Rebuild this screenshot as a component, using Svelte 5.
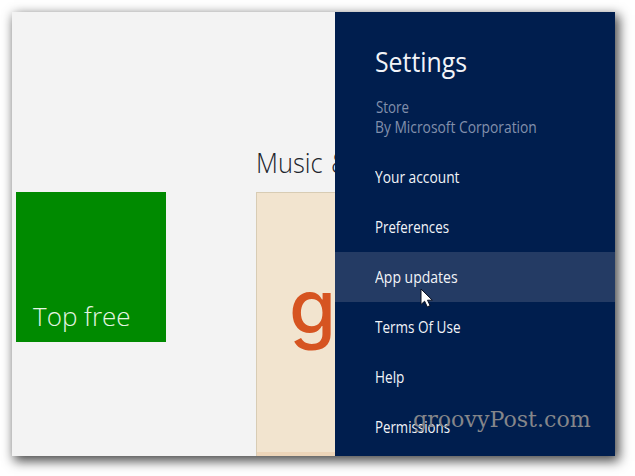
<script>
  const items = [
    { label: 'Your account', squeeze: 0.86 },
    { label: 'Preferences', squeeze: 0.83 },
    { label: 'App updates', squeeze: 0.875 },
    { label: 'Terms Of Use', squeeze: 0.845 },
    { label: 'Help', squeeze: 0.85 },
    { label: 'Permissions', squeeze: 0.83 }
  ];

  let selected = 'App updates';
</script>

<div class="page">
<div class="screen">
  <main class="store">
    <section class="group">
      <div class="tile top-free"><span>Top free</span></div>
    </section>
    <section class="group music">
      <h2><span>Music &amp; Video</span></h2>
      <div class="tile album"><span>g</span></div>
    </section>
  </main>

  <aside class="settings">
    <h1><span>Settings</span></h1>
    <p class="app-name"><span>Store</span></p>
    <p class="publisher"><span>By Microsoft Corporation</span></p>
    <nav>
      {#each items as item}
        <a href="#top" class:active={item.label === selected}>
          <span style="transform: scaleX({item.squeeze})">{item.label}</span>
        </a>
      {/each}
    </nav>
  </aside>

  <div class="watermark"><span>groovyPost.com</span></div>
  <svg class="cursor" width="14" height="21" viewBox="0 0 14 21">
    <path d="M1 1v15.5l3.6-3.3 2.7 5.7 2.8-1.3-2.6-5.4h4.8z" fill="#fff" stroke="#0b1020" stroke-width="1" />
  </svg>
</div>
</div>

<style>
:global(body) {
  margin: 0;
  background: #fff;
}
.page {
  width: 635px;
  height: 476px;
  padding: 12px;
  box-sizing: border-box;
  overflow: hidden;
}
.screen {
  position: relative;
  display: flex;
  width: 603px;
  height: 444px;
  background: #f3f3f3;
  box-shadow: 3px 4px 11px 1px rgba(0, 0, 0, 0.72);
  font-family: "Open Sans", "Noto Sans", sans-serif;
}
span {
  display: inline-block;
  transform-origin: 0 50%;
  white-space: nowrap;
}
h1, h2, p {
  margin: 0;
  font-weight: 400;
}
.store {
  display: flex;
  width: 323px;
  height: 444px;
  overflow: hidden;
}
.group {
  flex: none;
  width: 240px;
  padding: 180px 0 0 4px;
  box-sizing: border-box;
}
.music {
  padding-top: 134px;
}
.music h2 {
  height: 46px;
  font-size: 27px;
  font-weight: 300;
  line-height: 34px;
  word-spacing: 2px;
  color: #20242c;
}
.music h2 span {
  transform: scaleX(0.94);
}
.top-free {
  display: flex;
  align-items: flex-end;
  width: 150px;
  height: 150px;
  padding: 0 0 9px 17px;
  box-sizing: border-box;
  background: #008a00;
  color: #e6f5e3;
  font-size: 26px;
  font-weight: 300;
  line-height: 34px;
}
.album {
  width: 310px;
  height: 310px;
  padding: 63px 0 0 32px;
  box-sizing: border-box;
  border: 1px solid #d8ccb4;
  background: linear-gradient(#f2e4cf 259px, #edd5b9 259px);
  color: #d65421;
  font-family: Inter, sans-serif;
  font-size: 76px;
  font-weight: 500;
  line-height: 100px;
}
.settings {
  width: 280px;
  height: 444px;
  overflow: hidden;
  background: #001e4e;
  color: #f2f4f8;
}
.settings h1 {
  padding: 32px 0 0 40px;
  font-size: 27px;
  line-height: 36px;
}
.settings h1 span {
  transform: scaleX(0.92);
}
.app-name, .publisher {
  padding-left: 41px;
  color: #8290ac;
  font-size: 16px;
  line-height: 20px;
}
.app-name {
  margin-top: 17px;
}
.publisher {
  padding-left: 40px;
}
.app-name span {
  transform: scaleX(0.83);
}
.publisher span {
  transform: scaleX(0.863);
}
nav {
  margin-top: 15px;
}
nav a {
  display: block;
  height: 50px;
  padding-left: 40px;
  color: #f2f4f8;
  font-size: 16px;
  line-height: 50px;
  text-decoration: none;
}
nav a.active {
  background: #243b64;
}
.watermark {
  position: absolute;
  left: 401px;
  top: 390px;
  color: #85868a;
  font-family: "DejaVu Serif", serif;
  font-size: 22px;
  line-height: 36px;
}
.watermark span {
  transform: scaleX(1.006);
}
.cursor {
  position: absolute;
  left: 408px;
  top: 276px;
}
</style>
